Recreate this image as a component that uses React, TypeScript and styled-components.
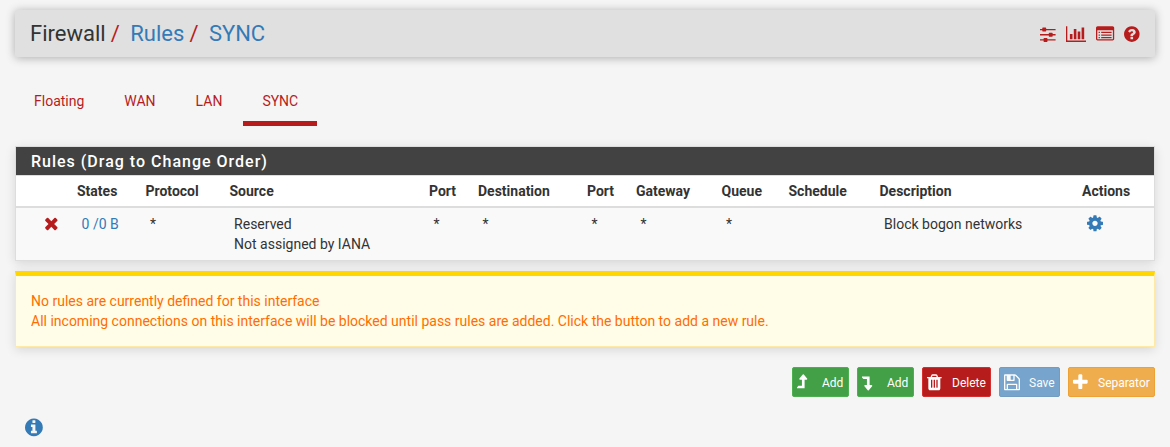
import React from "react";
import styled, { createGlobalStyle } from "styled-components";

const red = "#b71c1c";
const blue = "#337ab7";

const GlobalStyle = createGlobalStyle`
  * { box-sizing: border-box; }
  body {
    margin: 0;
    background: #f5f5f5;
    color: #333;
    font: 14px/20px Roboto, "Liberation Sans", sans-serif;
  }
  a { color: ${blue}; text-decoration: none; }
`;

const circle =
  "M1664 896q0 209-103 385.5t-279.5 279.5-385.5 103-385.5-103-279.5-279.5-103-385.5 103-385.5 279.5-279.5 385.5-103 385.5 103 279.5 279.5 103 385.5z";

/* x offset and advance width of each glyph on a 1792-unit tall grid */
const glyphs = {
  sliders: {
    x: 128,
    w: 1536,
    d: "M128 1408h352v128h-352zM544 1280h256q26 0 45 19t19 45v256q0 26-19 45t-45 19h-256q-26 0-45-19t-19-45v-256q0-26 19-45t45-19zM864 1408h800v128h-800zM128 896h864v128h-864zM1056 768h256q26 0 45 19t19 45v256q0 26-19 45t-45 19h-256q-26 0-45-19t-19-45v-256q0-26 19-45t45-19zM1376 896h288v128h-288zM128 384h224v128h-224zM416 256h256q26 0 45 19t19 45v256q0 26-19 45t-45 19h-256q-26 0-45-19t-19-45v-256q0-26 19-45t45-19zM736 384h928v128h-928z",
  },
  chart: {
    x: 0,
    w: 2048,
    d: "M640 896v512h-256v-512h256zm384-512v1024h-256v-1024h256zm1024 1152v128h-2048v-1536h128v1408h1920zm-640-896v768h-256v-768h256zm384-384v1152h-256v-1152h256z",
  },
  list: {
    x: 0,
    w: 1792,
    d: "M256 672h128v128h-128zM256 928h128v128h-128zM256 1184h128v128h-128zM512 672h1024v128h-1024zM512 928h1024v128h-1024zM512 1184h1024v128h-1024zM1664 1376v-832q0-13-9.500-22.500t-22.500-9.500h-1472q-13 0-22.500 9.500t-9.500 22.500v832q0 13 9.500 22.500t22.500 9.500h1472q13 0 22.500-9.500t9.500-22.500zm128-1088v1088q0 66-47 113t-113 47h-1472q-66 0-113-47t-47-113v-1088q0-66 47-113t113-47h1472q66 0 113 47t47 113z",
  },
  question: {
    x: 128,
    w: 1536,
    d:
      "M1024 1376v-192q0-14-9-23t-23-9h-192q-14 0-23 9t-9 23v192q0 14 9 23t23 9h192q14 0 23-9t9-23zm256-672q0-88-55.500-163t-138.500-116-170-41q-243 0-371 213-15 24 8 42l132 100q7 6 19 6 16 0 25-12 53-68 86-92 34-24 86-24 48 0 85.500 26t37.500 59q0 38-20 61t-68 45q-63 28-115.500 86.500t-52.500 125.500v36q0 14 9 23t23 9h192q14 0 23-9t9-23q0-19 21.500-49.500t54.500-49.500q32-18 49-28.500t46-35 44.500-48 28-60.500 12.500-81z" +
      circle,
  },
  info: {
    x: 128,
    w: 1536,
    d:
      "M1152 1376v-160q0-14-9-23t-23-9h-96v-512q0-14-9-23t-23-9h-320q-14 0-23 9t-9 23v160q0 14 9 23t23 9h96v320h-96q-14 0-23 9t-9 23v160q0 14 9 23t23 9h448q14 0 23-9t9-23zm-128-896v-160q0-14-9-23t-23-9h-192q-14 0-23 9t-9 23v160q0 14 9 23t23 9h192q14 0 23-9t9-23z" +
      circle,
  },
  times: {
    x: 192,
    w: 1408,
    d: "M1490 1322q0 40-28 68l-136 136q-28 28-68 28t-68-28l-294-294-294 294q-28 28-68 28t-68-28l-136-136q-28-28-28-68t28-68l294-294-294-294q-28-28-28-68t28-68l136-136q28-28 68-28t68 28l294 294 294-294q28-28 68-28t68 28l136 136q28 28 28 68t-28 68l-294 294 294 294q28 28 28 68z",
  },
  cog: {
    x: 128,
    w: 1536,
    d: "M1152 896q0-106-75-181t-181-75-181 75-75 181 75 181 181 75 181-75 75-181zm512-109v222q0 12-8 23t-20 13l-185 28q-19 54-39 91 35 50 107 138 10 12 10 25t-9 23q-27 37-99 108t-94 71q-12 0-26-9l-138-108q-44 23-91 38-16 136-29 186-7 28-36 28h-222q-14 0-24.500-8.500t-11.500-21.500l-28-184q-49-16-90-37l-141 107q-10 9-25 9-14 0-25-11-126-114-165-168-7-10-7-23 0-12 8-23 15-21 51-66.500t54-70.500q-27-50-41-99l-183-27q-13-2-21-12.500t-8-23.500v-222q0-12 8-23t19-13l186-28q14-46 39-92-40-57-107-138-10-12-10-24 0-10 9-23 26-36 98.500-107.500t94.500-71.500q13 0 26 10l138 107q44-23 91-38 16-136 29-186 7-28 36-28h222q14 0 24.500 8.500t11.500 21.500l28 184q49 16 90 37l142-107q9-9 24-9 13 0 25 10 129 119 165 170 7 8 7 22 0 12-8 23-15 21-51 66.500t-54 70.500q26 50 41 98l183 28q13 2 21 12.500t8 23.500z",
  },
  up: {
    x: 320,
    w: 1024,
    d: "M1299 603q-19 37-56 37h-192v800q0 14-9 23t-23 9h-704q-21 0-30-18-8-20 4-35l160-192q9-11 25-11h320v-576h-192q-37 0-56-37-17-37 7-66l320-384q18-22 49-22t49 22l320 384q25 29 8 66z",
  },
  down: {
    x: 320,
    w: 1024,
    d: "M1299 1200q-19-37-56-37h-192v-800q0-14-9-23t-23-9h-704q-21 0-30 18-8 20 4 35l160 192q9 11 25 11h320v576h-192q-37 0-56 37-17 37 7 66l320 384q18 22 49 22t49-22l320-384q25-29 8-66z",
  },
  trash: {
    x: 192,
    w: 1408,
    d: "M704 1376v-704q0-14-9-23t-23-9h-64q-14 0-23 9t-9 23v704q0 14 9 23t23 9h64q14 0 23-9t9-23zm256 0v-704q0-14-9-23t-23-9h-64q-14 0-23 9t-9 23v704q0 14 9 23t23 9h64q14 0 23-9t9-23zm256 0v-704q0-14-9-23t-23-9h-64q-14 0-23 9t-9 23v704q0 14 9 23t23 9h64q14 0 23-9t9-23zm-544-992h448l-48-117q-7-9-17-11h-317q-10 2-17 11zm928 32v64q0 14-9 23t-23 9h-96v948q0 83-47 143.500t-113 60.500h-832q-66 0-113-58.500t-47-141.500v-952h-96q-14 0-23-9t-9-23v-64q0-14 9-23t23-9h309l70-167q15-37 54-63t79-26h320q40 0 79 26t54 63l70 167h309q14 0 23 9t9 23z",
  },
  save: {
    x: 128,
    w: 1536,
    d: "M512 1536h768v-384h-768v384zm896 0h128v-896q0-14-10-38.500t-20-34.500l-281-281q-10-10-34-20t-39-10v416q0 40-28 68t-68 28h-576q-40 0-68-28t-28-68v-416h-128v1280h128v-416q0-40 28-68t68-28h832q40 0 68 28t28 68v416zm-384-928v-320q0-13-9.500-22.500t-22.500-9.500h-192q-13 0-22.500 9.500t-9.500 22.500v320q0 13 9.500 22.500t22.500 9.500h192q13 0 22.500-9.500t9.500-22.500zm640 32v928q0 40-28 68t-68 28h-1344q-40 0-68-28t-28-68v-1344q0-40 28-68t68-28h928q40 0 88 20t76 48l280 280q28 28 48 76t20 88z",
  },
  plus: {
    x: 192,
    w: 1408,
    d: "M1600 736v192q0 40-28 68t-68 28h-416v416q0 40-28 68t-68 28h-192q-40 0-68-28t-28-68v-416h-416q-40 0-68-28t-28-68v-192q0-40 28-68t68-28h416v-416q0-40 28-68t68-28h192q40 0 68 28t28 68v416h416q40 0 68 28t28 68z",
  },
};

type GlyphName = keyof typeof glyphs;

const Svg = styled.svg`
  display: block;
  flex: none;
  fill: currentColor;
`;

function Icon({ name, size = 18.67 }: { name: GlyphName; size?: number }) {
  const g = glyphs[name];
  return (
    <Svg viewBox={`${g.x} 0 ${g.w} 1792`} width={(g.w / 1792) * size} height={size} fillRule="evenodd">
      <path d={g.d} />
    </Svg>
  );
}

const Page = styled.main`
  padding: 10px 15px 0;
  height: 447px;
  overflow: hidden;
`;

const Header = styled.header`
  display: flex;
  align-items: center;
  justify-content: space-between;
  height: 47px;
  padding: 0 15px;
  background: #e0e0e0;
  border-radius: 2px;
  box-shadow: 0 1px 10px rgba(0, 0, 0, 0.3);
`;

const Breadcrumb = styled.nav`
  display: flex;
  font-size: 22px;
  line-height: 24px;
`;

const Slash = styled.span`
  width: 24.6px;
  padding-left: 5.2px;
  color: ${red};
`;

const HeaderIcons = styled.div`
  display: flex;
  gap: 9.9px;
  margin-top: 2px;
  color: ${red};
`;

const Tabs = styled.nav`
  display: flex;
  gap: 2px;
  height: 51px;
  margin-top: 18px;
`;

const Tab = styled.a<{ $active?: boolean }>`
  padding: 16px 19px 0;
  border-bottom: 5px solid ${(p) => (p.$active ? red : "transparent")};
  && { color: ${red}; }
`;

const Panel = styled.section`
  margin-top: 20px;
  height: 115px;
  border: 1px solid #ddd;
  background: #fff;
  box-shadow: 0 3px 10px rgba(0, 0, 0, 0.12);
`;

const PanelTitle = styled.h2`
  margin: 0;
  height: 29px;
  padding: 0 15px;
  border-bottom: 1px solid #ddd;
  background: #424242;
  color: #fff;
  font-size: 16px;
  font-weight: 500;
  line-height: 29px;
  letter-spacing: 1px;
`;

const Row = styled.div<{ $head?: boolean }>`
  display: grid;
  grid-template-columns: 56px 68.500px 84px 199.500px 49px 109px 49px 85.500px 67px 91px 202.500px 1fr;
  height: ${(p) => (p.$head ? "32px" : "52px")};
  padding: ${(p) => (p.$head ? "5px 0 0 5px" : "6px 0 0 9.6px")};
  border-bottom: ${(p) => (p.$head ? "2px solid #ddd" : "0")};
  background: ${(p) => (p.$head ? "#fff" : "#f9f9f9")};
  font-weight: ${(p) => (p.$head ? 700 : 400)};
`;

const Cell = styled.div`
  white-space: nowrap;
`;

const BlockCell = styled(Cell)`
  padding: 0.4px 0 0 18.8px;
  color: ${red};
`;

const ActionCell = styled(Cell)`
  padding-top: 0.4px;
  color: ${blue};
`;

const Alert = styled.section`
  height: 76px;
  margin-top: 10px;
  padding: 15px;
  border: 1px solid #ffe9a8;
  border-top: 5px solid #ffd600;
  background: #fffde7;
  color: #ff6d00;
  box-shadow: 0 3px 10px rgba(0, 0, 0, 0.12);
`;

const Buttons = styled.div`
  display: flex;
  justify-content: flex-end;
  gap: 8px;
  margin-top: 20px;
`;

const Button = styled.button<{ $bg: string; $border: string; $width: number }>`
  display: flex;
  align-items: center;
  width: ${(p) => p.$width}px;
  height: 30px;
  padding: 0 4px;
  border: 1px solid ${(p) => p.$border};
  border-radius: 2px;
  background: ${(p) => p.$bg};
  color: #fff;
  font: 12px/18px Roboto, sans-serif;
  &:disabled { opacity: 0.65; }
`;

const ButtonIcon = styled.span`
  width: 25px;
  flex: none;
`;

const ButtonLabel = styled.span`
  margin-top: 2px;
`;

const Info = styled.div`
  margin: 19.5px 0 0 9.8px;
  color: ${blue};
`;

const columns = ["", "States", "Protocol", "Source", "Port", "Destination", "Port", "Gateway", "Queue", "Schedule", "Description", "Actions"];

const buttons: { icon: GlyphName; label: string; bg: string; border: string; width: number; disabled?: boolean }[] = [
  { icon: "up", label: "Add", bg: "#43a047", border: "#4caf50", width: 57 },
  { icon: "down", label: "Add", bg: "#43a047", border: "#4caf50", width: 57 },
  { icon: "trash", label: "Delete", bg: "#b71c1c", border: "#d32f2f", width: 69 },
  { icon: "save", label: "Save", bg: "#337ab7", border: "#2e6da4", width: 61, disabled: true },
  { icon: "plus", label: "Separator", bg: "#f0ad4e", border: "#eea236", width: 87 },
];

export default function App() {
  return (
    <>
      <GlobalStyle />
      <Page>
        <Header>
          <Breadcrumb>
            <span>Firewall</span>
            <Slash>/</Slash>
            <a>Rules</a>
            <Slash>/</Slash>
            <a>SYNC</a>
          </Breadcrumb>
          <HeaderIcons>
            <Icon name="sliders" size={18.2} />
            <Icon name="chart" size={18.2} />
            <Icon name="list" size={18.2} />
            <Icon name="question" size={18.2} />
          </HeaderIcons>
        </Header>
        <Tabs>
          <Tab>Floating</Tab>
          <Tab>WAN</Tab>
          <Tab>LAN</Tab>
          <Tab $active>SYNC</Tab>
        </Tabs>
        <Panel>
          <PanelTitle>Rules (Drag to Change Order)</PanelTitle>
          <Row $head>
            {columns.map((c, i) => (
              <Cell key={i}>{c}</Cell>
            ))}
          </Row>
          <Row>
            <BlockCell>
              <Icon name="times" />
            </BlockCell>
            <Cell>
              <a>0 /0 B</a>
            </Cell>
            <Cell>*</Cell>
            <Cell>
              Reserved
              <br />
              Not assigned by IANA
            </Cell>
            <Cell>*</Cell>
            <Cell>*</Cell>
            <Cell>*</Cell>
            <Cell>*</Cell>
            <Cell>*</Cell>
            <Cell />
            <Cell>Block bogon networks</Cell>
            <ActionCell>
              <Icon name="cog" />
            </ActionCell>
          </Row>
        </Panel>
        <Alert>
          No rules are currently defined for this interface
          <br />
          All incoming connections on this interface will be blocked until pass rules are added. Click the button to add a new rule.
        </Alert>
        <Buttons>
          {buttons.map((b, i) => (
            <Button key={i} $bg={b.bg} $border={b.border} $width={b.width} disabled={b.disabled}>
              <ButtonIcon>
                <Icon name={b.icon} />
              </ButtonIcon>
              <ButtonLabel>{b.label}</ButtonLabel>
            </Button>
          ))}
        </Buttons>
        <Info>
          <Icon name="info" size={20.8} />
        </Info>
      </Page>
    </>
  );
}
